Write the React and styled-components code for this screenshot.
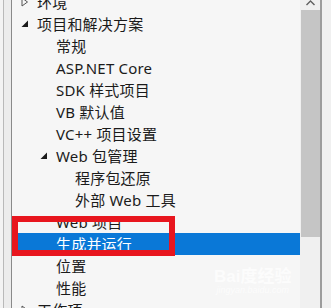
import React from 'react';
import styled, { createGlobalStyle } from 'styled-components';

const GlobalStyle = createGlobalStyle`
  html, body {
    margin: 0;
    padding: 0;
    background: #f0f0f0;
  }
  body {
    font-family: 'Segoe UI', 'Noto Sans', 'Noto Sans CJK SC', sans-serif;
  }
`;

const Window = styled.div`
  position: relative;
  display: flex;
  width: 331px;
  height: 308px;
  overflow: hidden;
  background: #f0f0f0;
`;

const LeftEdge = styled.div`
  width: 12px;
  flex: none;
  background: #ececec;
  border-left: 3px solid #f3f3f3;
  box-sizing: border-box;
  box-shadow: inset 1px 0 0 #b9b9b9, inset -1px 0 0 #8a8a8a;
`;

const TreePanel = styled.div`
  width: 288px;
  flex: none;
  background: #f6f6f6;
  overflow: hidden;
`;

const TreeList = styled.ul`
  list-style: none;
  margin: -9px 0 0;
  padding: 0;
`;

const Row = styled.li`
  display: flex;
  align-items: center;
  height: 22px;
  padding-left: ${(p) => 9 + p.level * 19}px;
  background: ${(p) => (p.selected ? '#0a78d7' : 'transparent')};
  color: ${(p) => (p.selected ? '#ffffff' : '#1b1b1b')};
  font-size: 15px;
  letter-spacing: 0.2px;
  white-space: nowrap;
`;

const Arrow = styled.span`
  display: flex;
  align-items: center;
  width: 16px;
  height: 22px;
  flex: none;
`;

const Label = styled.span`
  line-height: 22px;
`;

const ScrollBar = styled.div`
  width: 20px;
  flex: none;
  display: flex;
  flex-direction: column;
  align-items: center;
  background: #f0f0f0;
`;

const ScrollButton = styled.div`
  height: 10px;
  width: 100%;
  display: flex;
  justify-content: center;
  align-items: flex-start;
`;

const Thumb = styled.div`
  width: 19px;
  height: 227px;
  background: #c5c5c5;
`;

const RightEdge = styled.div`
  flex: 1;
  border-left: 2px solid #9c9c9c;
  background: #f0f0f0;
`;

const Highlight = styled.div`
  position: absolute;
  left: 12px;
  top: 216px;
  width: 163px;
  height: 40px;
  border: 6px solid #e8161e;
  box-sizing: border-box;
  pointer-events: none;
`;

const Watermark = styled.div`
  position: absolute;
  left: 214px;
  top: 262px;
  display: flex;
  flex-direction: column;
  align-items: center;
  color: rgba(255, 255, 255, 0.7);
  font-family: 'Liberation Sans', 'Noto Sans CJK SC', sans-serif;
  pointer-events: none;
  span:first-child {
    font-size: 17px;
    font-weight: bold;
  }
  span:last-child {
    font-size: 9px;
    font-style: italic;
    margin-top: -2px;
  }
`;

const Expanded = () => (
  <svg width="8" height="8" viewBox="0 0 8 8">
    <polygon points="7,0.5 7,7 0.5,7" fill="#1b1b1b" />
  </svg>
);

const Collapsed = () => (
  <svg width="8" height="10" viewBox="0 0 8 10">
    <polygon points="1,1 6.5,5 1,9" fill="none" stroke="#555" strokeWidth="1" />
  </svg>
);

const items = [
  { label: '环境', level: 0, arrow: 'collapsed' },
  { label: '项目和解决方案', level: 0, arrow: 'expanded' },
  { label: '常规', level: 1 },
  { label: 'ASP.NET Core', level: 1 },
  { label: 'SDK 样式项目', level: 1 },
  { label: 'VB 默认值', level: 1 },
  { label: 'VC++ 项目设置', level: 1 },
  { label: 'Web 包管理', level: 1, arrow: 'expanded' },
  { label: '程序包还原', level: 2 },
  { label: '外部 Web 工具', level: 2 },
  { label: 'Web 项目', level: 1 },
  { label: '生成并运行', level: 1, selected: true },
  { label: '位置', level: 1 },
  { label: '性能', level: 1 },
  { label: '工作项', level: 0, arrow: 'collapsed' },
];

const App = () => (
  <>
    <GlobalStyle />
    <Window>
      <LeftEdge />
      <TreePanel>
        <TreeList>
          {items.map((it) => (
            <Row key={it.label} level={it.level} selected={it.selected}>
              <Arrow>
                {it.arrow === 'expanded' && <Expanded />}
                {it.arrow === 'collapsed' && <Collapsed />}
              </Arrow>
              <Label>{it.label}</Label>
            </Row>
          ))}
        </TreeList>
      </TreePanel>
      <ScrollBar>
        <ScrollButton>
          <svg width="9" height="6" viewBox="0 0 9 6">
            <polyline points="0.5,5 4.5,1 8.5,5" fill="none" stroke="#606060" strokeWidth="1.4" />
          </svg>
        </ScrollButton>
        <Thumb />
      </ScrollBar>
      <RightEdge />
      <Highlight />
      <Watermark>
        <span>Bai度经验</span>
        <span>jingyan.baidu.com</span>
      </Watermark>
    </Window>
  </>
);

export default App;
